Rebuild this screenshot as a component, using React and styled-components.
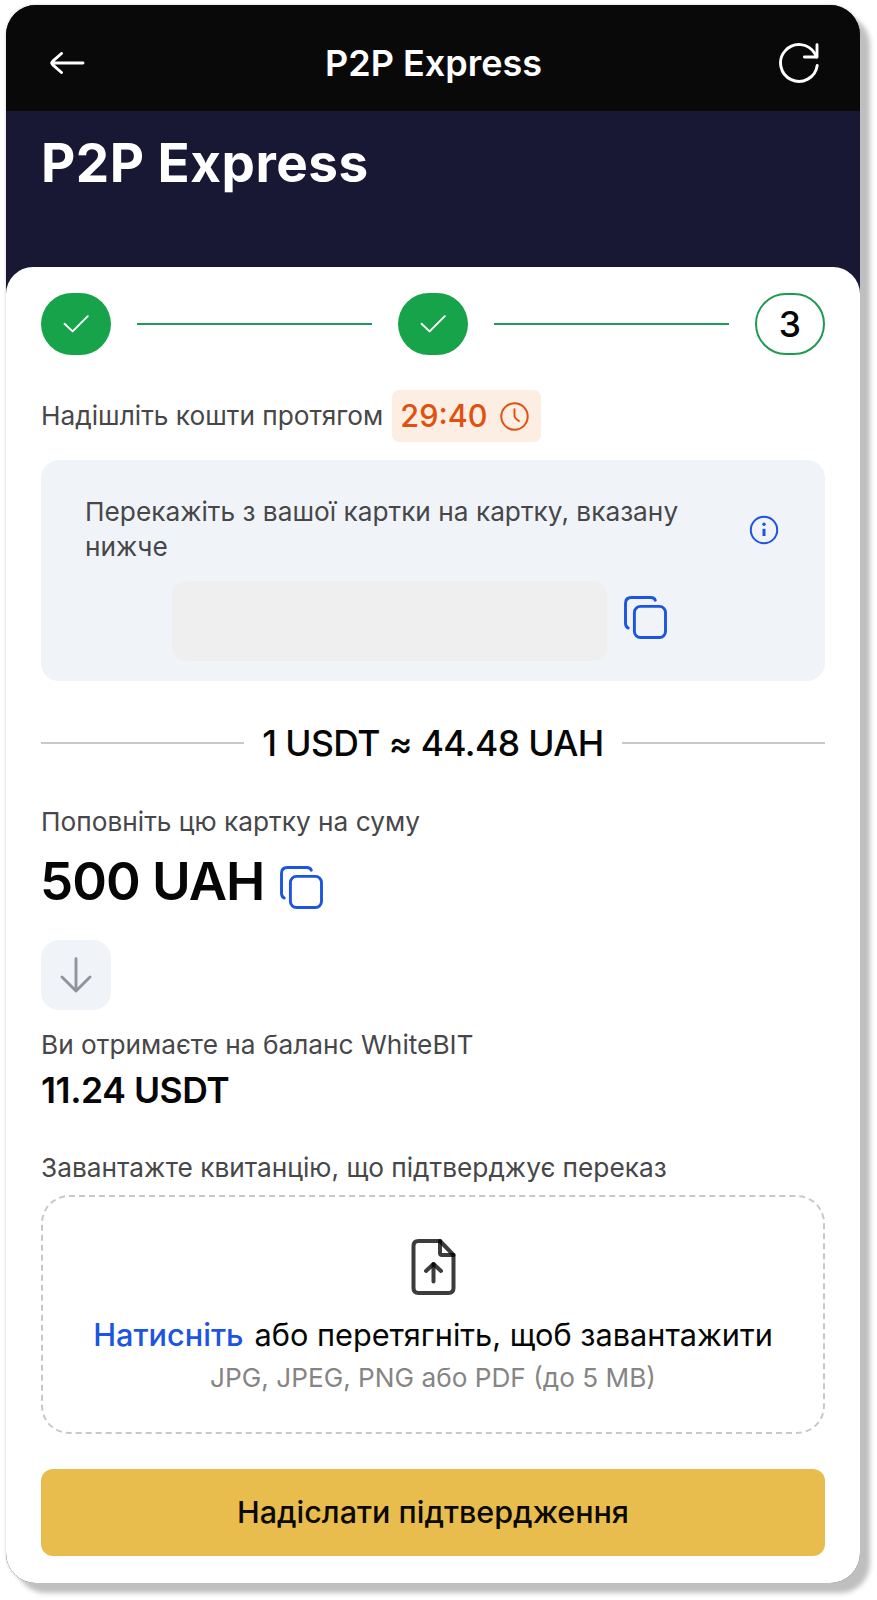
import React from 'react';
import styled, { createGlobalStyle, css } from 'styled-components';

const GlobalStyle = createGlobalStyle`
  * {
    box-sizing: border-box;
  }

  body {
    margin: 0;
    background: #ffffff;
    font-family: Inter, 'Liberation Sans', sans-serif;
    color: #060606;
  }

  svg {
    display: block;
    flex-shrink: 0;
    fill: none;
    stroke-linecap: round;
    stroke-linejoin: round;
  }
`;

const Page = styled.div`
  height: 1600px;
  padding: 5px 17px 17px 6px;
  overflow: hidden;
`;

const Card = styled.main`
  display: flex;
  flex-direction: column;
  height: 1578px;
  border-radius: 30px;
  overflow: hidden;
  background: #191834;
  box-shadow: 10px 10px 5px #bfbfbf, 0 0 3px rgba(0, 0, 0, 0.22);
`;

const TopBar = styled.header`
  display: grid;
  grid-template-columns: 1fr auto 1fr;
  align-items: center;
  height: 106px;
  padding: 10px 41px 0 44px;
  background: #09090a;
`;

const TopTitle = styled.div`
  margin-right: 2px;
  color: #ffffff;
  font-size: 36px;
  font-weight: 600;
  line-height: 44px;
`;

const IconButton = styled.button`
  display: flex;
  justify-self: ${({ $end }) => ($end ? 'end' : 'start')};
  margin: ${({ $margin }) => $margin || 0};
  padding: 0;
  border: 0;
  background: none;
  color: ${({ $color }) => $color || '#1c55df'};
`;

const Hero = styled.section`
  height: 156px;
  padding: 21px 35px;
`;

const HeroTitle = styled.h1`
  margin: 0;
  color: #ffffff;
  font-size: 53px;
  font-weight: 700;
  line-height: 63px;
  letter-spacing: 0.5px;
`;

const Panel = styled.section`
  flex: 1;
  padding: 26px 35px 0;
  border-radius: 27px 27px 0 0;
  background: #ffffff;
`;

const Steps = styled.div`
  display: flex;
  align-items: center;
  gap: 26px;
`;

const Step = styled.div`
  display: flex;
  align-items: center;
  justify-content: center;
  width: 70px;
  height: 62px;
  border-radius: 31px;
  font-size: 35.5px;
  font-weight: 500;
  ${({ $done }) =>
    $done
      ? css`
          background: #17a34a;
          color: #ffffff;
        `
      : css`
          border: 2px solid #1f9a50;
          color: #060606;
        `}
`;

const StepLine = styled.div`
  flex: 1;
  height: 2px;
  background: #1f9a58;
`;

const Label = styled.p`
  margin: ${({ $top }) => $top || 0}px 0 0;
  color: #47474a;
  font-size: 26.25px;
  line-height: ${({ $line }) => $line || 36}px;
`;

const TimerRow = styled.div`
  display: flex;
  align-items: center;
  gap: 9px;
  margin-top: 35px;
`;

const Timer = styled.div`
  display: flex;
  align-items: center;
  justify-content: space-between;
  width: 149px;
  height: 52px;
  padding: 0 12px 0 8px;
  border-radius: 7px;
  background: #fdeee4;
  color: #e2500f;
  font-size: 30.6px;
  font-weight: 500;
  line-height: 50px;
`;

const TransferBox = styled.div`
  height: 221px;
  margin-top: 18px;
  padding: 34px 44px 0;
  border-radius: 18px;
  background: #f0f4f9;
`;

const TransferNote = styled.div`
  display: flex;
  align-items: center;
  justify-content: space-between;

  p {
    width: 620px;
  }
`;

const CardNumberRow = styled.div`
  display: flex;
  align-items: center;
  justify-content: center;
  gap: 17px;
  margin-top: 17px;
  padding-right: 27px;
`;

const CardNumber = styled.div`
  width: 435px;
  height: 80px;
  border-radius: 14px;
  background: #efefef;
`;

const Rate = styled.div`
  display: flex;
  align-items: center;
  gap: 18px;
  margin-top: 40px;
  font-size: 35.5px;
  font-weight: 500;
  line-height: 44px;
  letter-spacing: -0.6px;

  span {
    padding-top: 1px;
    margin-bottom: -1px;
  }

  &::before,
  &::after {
    content: '';
    flex: 1;
    height: 2px;
    background: #c9c9c9;
  }
`;

const AmountRow = styled.div`
  display: flex;
  align-items: center;
  gap: 16px;
  margin-top: 11px;
`;

const Amount = styled.div`
  margin-left: -1px;
  font-size: 52.7px;
  font-weight: 600;
  line-height: 61px;
  letter-spacing: -1px;
`;

const ArrowBox = styled.div`
  display: flex;
  align-items: center;
  justify-content: center;
  width: 70px;
  height: 70px;
  margin-top: 28px;
  border-radius: 18px;
  background: #f0f4f9;
  color: #92939c;
`;

const Receive = styled.div`
  margin-top: 6px;
  font-size: 35.5px;
  font-weight: 600;
  line-height: 44px;
  letter-spacing: -0.43px;
`;

const DropZone = styled.div`
  display: flex;
  flex-direction: column;
  align-items: center;
  height: 239px;
  margin-top: 10px;
  padding-top: 42px;
  border: 2px dashed #c8c8c8;
  border-radius: 28px;
`;

const DropText = styled.div`
  display: flex;
  gap: 11px;
  margin-top: 20px;
  font-size: 30.7px;
  line-height: 40px;

  b {
    color: #1c55df;
    font-weight: 450;
  }
`;

const DropHint = styled.div`
  margin-top: 5px;
  color: #858585;
  font-size: 26.2px;
  line-height: 36px;
`;

const Submit = styled.button`
  display: block;
  width: 100%;
  height: 87px;
  margin-top: 35px;
  padding: 0 0 2px;
  border: 0;
  border-radius: 12px;
  background: #e9bd4d;
  color: #0b0903;
  font: 500 30.5px/85px Inter, sans-serif;
`;

const BackIcon = () => (
  <svg width="35" height="22" viewBox="0 0 35 22" stroke="currentColor" strokeWidth="2.9">
    <path d="M33 11H1.6M11.5 1.5L2.8 9.2Q1 11 2.8 12.8L11.5 20.5" />
  </svg>
);

const RefreshIcon = () => (
  <svg width="40" height="40" viewBox="0 0 40 40" stroke="currentColor" strokeWidth="2.9">
    <path d="M38.2 22.5A18.4 18.4 0 1 1 35.8 10.6L37.6 14" />
    <path d="M38 1.8V14H25.4" />
  </svg>
);

const CheckIcon = () => (
  <svg width="26" height="18" viewBox="0 0 26 18" stroke="currentColor" strokeWidth="1.9">
    <path d="M1.5 8.8L9.6 16.4L24.8 1.2" />
  </svg>
);

const ClockIcon = () => (
  <svg width="29" height="29" viewBox="0 0 29 29" stroke="currentColor" strokeWidth="2">
    <circle cx="14.5" cy="14.5" r="13.2" />
    <path d="M14.5 7.2V14.2Q14.6 15.8 19 19" />
  </svg>
);

const InfoIcon = () => (
  <svg width="34" height="34" viewBox="0 0 34 34" stroke="currentColor" strokeWidth="2">
    <circle cx="17" cy="17" r="13.2" />
    <path d="M17 15.8V23" strokeWidth="3" strokeLinecap="butt" />
    <circle cx="17" cy="11.2" r="1.7" fill="currentColor" stroke="none" />
  </svg>
);

const CopyIcon = () => (
  <svg width="43" height="43" viewBox="0 0 43 43" stroke="currentColor" strokeWidth="2.9">
    <rect x="10.4" y="10.4" width="31.1" height="31.1" rx="6" />
    <path d="M31.3 4.2C30.6 2.3 29.3 1.5 27 1.5H7.5Q1.5 1.5 1.5 7.5V27C1.5 29.6 2.3 31.4 4.2 32" />
  </svg>
);

const DownIcon = () => (
  <svg width="32" height="36" viewBox="0 0 32 36" stroke="currentColor" strokeWidth="2.9">
    <path d="M16 1.8V34M2 20L16 34L30 20" />
  </svg>
);

// strokes are translucent, so they get darker where they cross
const FileUploadIcon = () => (
  <svg width="45" height="56" viewBox="0 0 44 56" stroke="#000000" strokeOpacity="0.76" strokeWidth="4">
    <path d="M28.5 2H7Q2 2 2 7V49Q2 54 7 54H37Q42 54 42 49V16Z" />
    <path d="M28.5 2V14Q28.5 16 30.5 16H42" />
    <path d="M22 25V42.5" />
    <path d="M14.5 32L22 25L29.5 32" />
  </svg>
);

export default function App() {
  return (
    <>
      <GlobalStyle />
      <Page>
        <Card>
          <TopBar>
            <IconButton $color="#ffffff">
              <BackIcon />
            </IconButton>
            <TopTitle>P2P Express</TopTitle>
            <IconButton $color="#ffffff" $end>
              <RefreshIcon />
            </IconButton>
          </TopBar>

          <Hero>
            <HeroTitle>P2P Express</HeroTitle>
          </Hero>

          <Panel>
            <Steps>
              <Step $done>
                <CheckIcon />
              </Step>
              <StepLine />
              <Step $done>
                <CheckIcon />
              </Step>
              <StepLine />
              <Step>3</Step>
            </Steps>

            <TimerRow>
              <Label>Надішліть кошти протягом</Label>
              <Timer>
                29:40
                <ClockIcon />
              </Timer>
            </TimerRow>

            <TransferBox>
              <TransferNote>
                <Label $line={35}>Перекажіть з вашої картки на картку, вказану нижче</Label>
                <IconButton $margin="2px 0 0">
                  <InfoIcon />
                </IconButton>
              </TransferNote>
              <CardNumberRow>
                <CardNumber />
                <IconButton $margin="0 0 7px">
                  <CopyIcon />
                </IconButton>
              </CardNumberRow>
            </TransferBox>

            <Rate>
              <span>1 USDT ≈ 44.48 UAH</span>
            </Rate>

            <Label $top={38} $line={37}>Поповніть цю картку на суму</Label>
            <AmountRow>
              <Amount>500 UAH</Amount>
              <IconButton $margin="12px 0 0">
                <CopyIcon />
              </IconButton>
            </AmountRow>

            <ArrowBox>
              <DownIcon />
            </ArrowBox>

            <Label $top={17}>Ви отримаєте на баланс WhiteBIT</Label>
            <Receive>11.24 USDT</Receive>

            <Label $top={37} $line={35}>Завантажте квитанцію, що підтверджує переказ</Label>
            <DropZone>
              <FileUploadIcon />
              <DropText>
                <b>Натисніть</b>
                <span>або перетягніть, щоб завантажити</span>
              </DropText>
              <DropHint>JPG, JPEG, PNG або PDF (до 5 MB)</DropHint>
            </DropZone>

            <Submit>Надіслати підтвердження</Submit>
          </Panel>
        </Card>
      </Page>
    </>
  );
}
